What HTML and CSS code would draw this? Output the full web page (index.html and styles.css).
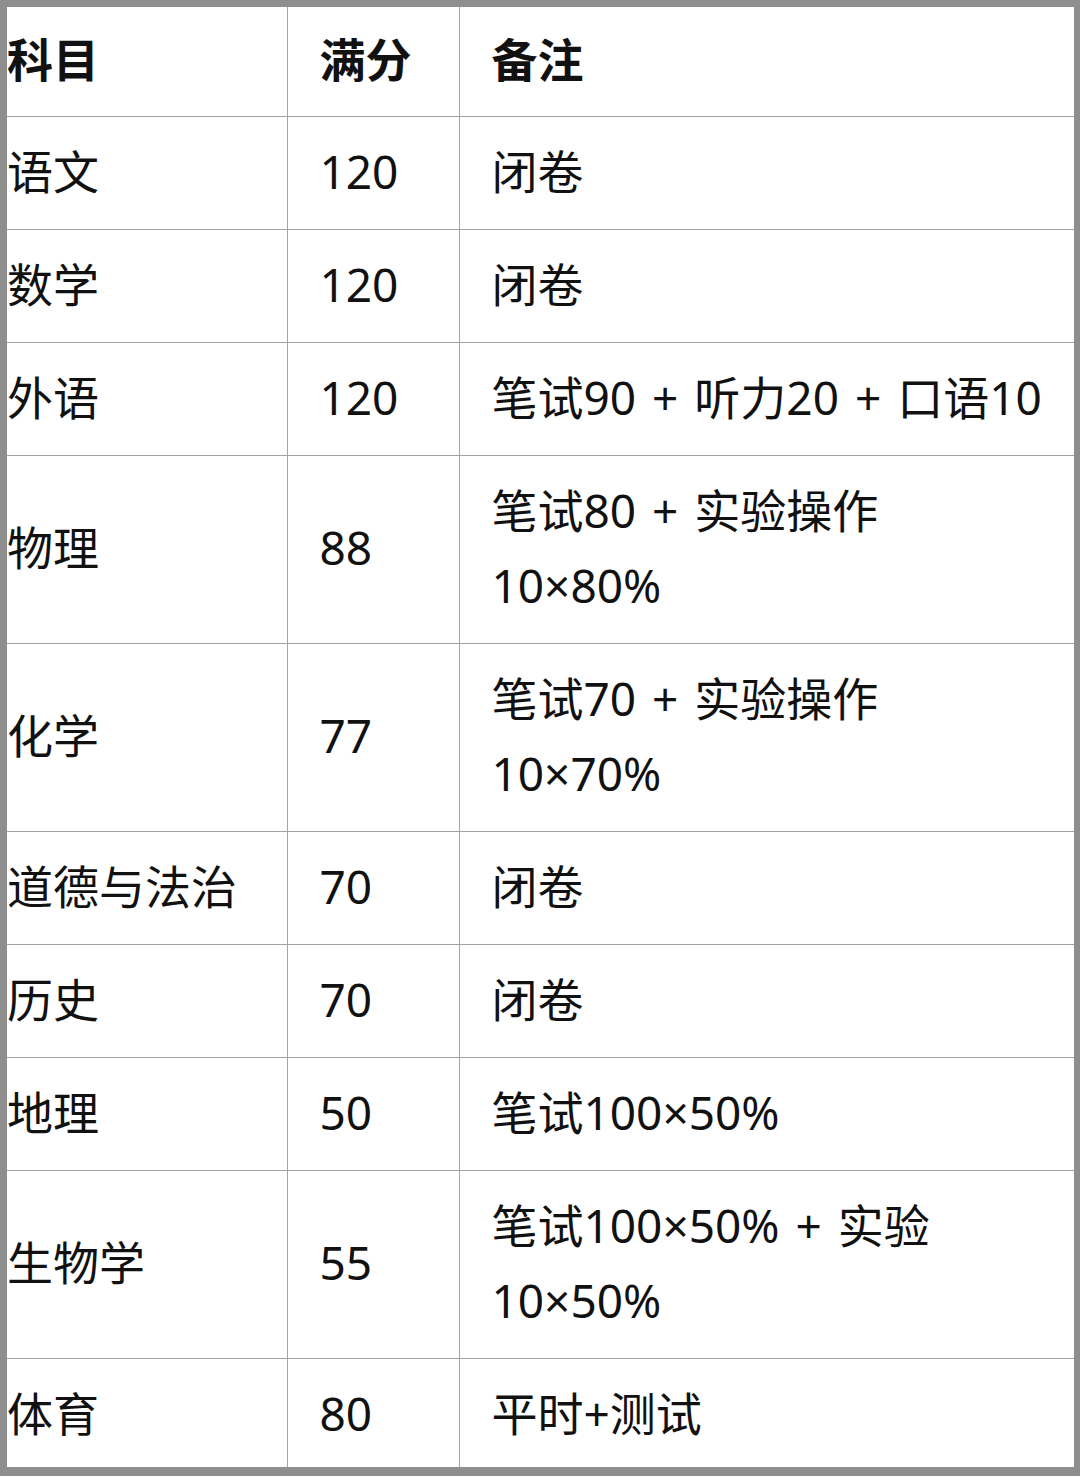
FILE: index.html
```html
<!DOCTYPE html>
<html lang="zh-CN">
<head>
<meta charset="utf-8">
<title>科目满分</title>
<link rel="stylesheet" href="styles.css">
</head>
<body>
<div class="frame">
<table class="scores">
  <colgroup>
    <col class="c-subject">
    <col class="c-score">
    <col class="c-note">
  </colgroup>
  <thead>
    <tr><th class="subject">科目</th><th class="score">满分</th><th class="note">备注</th></tr>
  </thead>
  <tbody>
    <tr><td class="subject">语文</td><td class="score">120</td><td class="note">闭卷</td></tr>
    <tr><td class="subject">数学</td><td class="score">120</td><td class="note">闭卷</td></tr>
    <tr><td class="subject">外语</td><td class="score">120</td><td class="note">笔试90 + 听力20 + 口语10</td></tr>
    <tr><td class="subject">物理</td><td class="score">88</td><td class="note">笔试80 + 实验操作<br>10×80%</td></tr>
    <tr><td class="subject">化学</td><td class="score">77</td><td class="note">笔试70 + 实验操作<br>10×70%</td></tr>
    <tr><td class="subject">道德与法治</td><td class="score">70</td><td class="note">闭卷</td></tr>
    <tr><td class="subject">历史</td><td class="score">70</td><td class="note">闭卷</td></tr>
    <tr><td class="subject">地理</td><td class="score">50</td><td class="note">笔试100×50%</td></tr>
    <tr><td class="subject">生物学</td><td class="score">55</td><td class="note">笔试100×50% + 实验<br>10×50%</td></tr>
    <tr class="last"><td class="subject">体育</td><td class="score">80</td><td class="note">平时+测试</td></tr>
  </tbody>
</table>
</div>
</body>
</html>
```

FILE: styles.css
```css
html, body {
  margin: 0;
  padding: 0;
  background: #ffffff;
}

.frame {
  box-sizing: border-box;
  width: 1080px;
  border-style: solid;
  border-color: #8e8e8e;
  border-width: 7px 6px 9px 7px;
  background: #ffffff;
}

.scores {
  width: 100%;
  border-collapse: collapse;
  table-layout: fixed;
  font-family: "Noto Sans", "Noto Sans CJK SC", sans-serif;
  font-size: 46px;
  word-spacing: 4px;
  color: #111111;
}

.c-subject { width: 280px; }
.c-score { width: 172px; }

.scores th,
.scores td {
  border: 1px solid #a3a3a3;
  line-height: 75px;
  padding: 16.5px 0 20.5px;
  text-align: left;
  vertical-align: middle;
  white-space: nowrap;
}

.scores th {
  font-weight: 700;
  padding: 15px 0 19px;
}

.scores thead th { border-top: none; }
.scores tr.last td { border-bottom: none; padding-bottom: 16px; padding-top: 17px; }

.subject { border-left: none !important; padding-left: 0 !important; }
.score { padding-left: 32px !important; }
.note { border-right: none !important; padding-left: 32px !important; }
```
